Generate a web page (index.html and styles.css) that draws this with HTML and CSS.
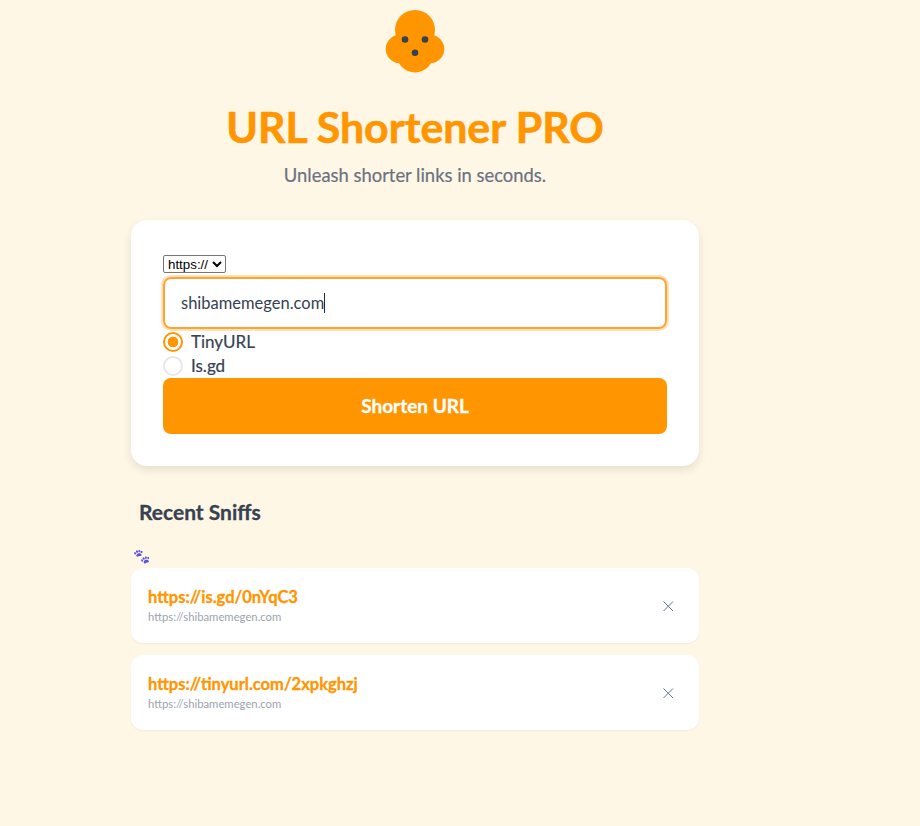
FILE: index.html
```html
<!DOCTYPE html>
<html lang="en">
<head>
<meta charset="utf-8">
<title>URL Shortener PRO</title>
<link rel="stylesheet" href="styles.css">
</head>
<body>
<main class="page">
  <header class="hero">
    <svg class="logo" width="60" height="64" viewBox="0 0 60 64" aria-hidden="true">
      <circle cx="30" cy="21" r="20" fill="#ff9500"/>
      <circle cx="15" cy="40" r="14.3" fill="#ff9500"/>
      <circle cx="45" cy="40" r="14.3" fill="#ff9500"/>
      <circle cx="30" cy="45" r="18.5" fill="#ff9500"/>
      <circle cx="20" cy="30.5" r="3.3" fill="#374151"/>
      <circle cx="40" cy="30.5" r="3.3" fill="#374151"/>
      <circle cx="30" cy="43.7" r="3.3" fill="#374151"/>
    </svg>
    <h1 class="title">URL Shortener PRO</h1>
    <p class="subtitle">Unleash shorter links in seconds.</p>
  </header>

  <section class="card">
    <select class="protocol"><option>https://</option><option>http://</option></select>
    <div class="url-field"><span class="url-text">shibamemegen.com</span><span class="caret"></span></div>
    <div class="radio-row"><span class="radio radio-on"></span><span class="radio-label">TinyURL</span></div>
    <div class="radio-row"><span class="radio"></span><span class="radio-label">Is.gd</span></div>
    <button class="submit" type="button">Shorten URL</button>
  </section>

  <h2 class="recent">Recent Sniffs</h2>
  <div class="paws">🐾</div>

  <ul class="links">
    <li class="link-card">
      <div class="link-body">
        <a class="short" href="#">https://is.gd/0nYqC3</a>
        <span class="orig">https://shibamemegen.com</span>
      </div>
      <svg class="close" width="12" height="12" viewBox="0 0 12 12" aria-hidden="true"><path d="M1.5 1.5l9.5 9.5M11 1.5l-9.5 9.5" stroke="#5f7390" stroke-width="1" fill="none"/></svg>
    </li>
    <li class="link-card">
      <div class="link-body">
        <a class="short" href="#">https://tinyurl.com/2xpkghzj</a>
        <span class="orig">https://shibamemegen.com</span>
      </div>
      <svg class="close" width="12" height="12" viewBox="0 0 12 12" aria-hidden="true"><path d="M1.5 1.5l9.5 9.5M11 1.5l-9.5 9.5" stroke="#5f7390" stroke-width="1" fill="none"/></svg>
    </li>
  </ul>
</main>
</body>
</html>
```

FILE: styles.css
```css
* { box-sizing: border-box; }
html, body { margin: 0; padding: 0; }
body {
  background: #fff7e6;
  color: #374151;
  font-family: Lato, "Noto Sans", sans-serif;
  height: 826px;
  overflow: hidden;
}
.page { width: 568px; margin-left: 131px; padding-top: 9px; }
.hero { display: flex; flex-direction: column; align-items: center; }
.logo { display: block; margin-bottom: 26px; }
.title {
  margin: 0;
  font-size: 42.8px;
  line-height: 56px;
  font-weight: 700;
  -webkit-text-stroke: 0.6px #ff9500;
  color: #ff9500;
  white-space: nowrap;
}
.subtitle {
  margin: 7px 0 0;
  font-size: 18.4px;
  line-height: 26px;
  -webkit-text-stroke: 0.2px #6b7280;
  color: #6b7280;
}
.card {
  margin-top: 32px;
  height: 246px;
  padding: 35px 32px 32px;
  background: #fff;
  border-radius: 16px;
  box-shadow: 0 4px 8px rgba(0,0,0,0.1);
  display: flex;
  flex-direction: column;
  align-items: flex-start;
}
.protocol {
  font-family: "Liberation Sans", Arial, sans-serif;
  font-size: 13.333px;
  height: 18px;
  background: #fff;
  color: #000;
  border: 1px solid #767676;
  border-radius: 2px;
  margin-bottom: 4px;
}
.url-field {
  width: 100%;
  height: 52px;
  padding: 0 16px;
  border: 2px solid #ffa333;
  border-radius: 8px;
  box-shadow: 0 0 0 2px rgba(255,149,0,0.28);
  display: flex;
  align-items: center;
  font-size: 16.5px;
  color: #374151;
}
.caret { width: 1px; height: 20px; background: #1f2937; }
.radio-row {
  display: flex;
  align-items: center;
  gap: 8px;
  height: 24px;
  font-size: 17px;
  line-height: 22px;
  color: #374151;
}
.radio-label { margin-top: -1px; -webkit-text-stroke: 0.2px #374151; }
.url-field + .radio-row { margin-top: 1px; }
.radio {
  width: 20px;
  height: 20px;
  border: 2px solid #e5e7eb;
  border-radius: 50%;
  background: #fff;
}
.radio-on {
  border-color: #ff9500;
  background: radial-gradient(circle, #ff9500 0 5px, #fff 5.7px);
}
.submit {
  margin-top: 0;
  width: 100%;
  height: 56px;
  padding: 0 0 2px;
  border: 0;
  border-radius: 8px;
  background: #ff9500;
  color: #fff;
  font-family: inherit;
  font-size: 19px;
  font-weight: 700;
  -webkit-text-stroke: 0.3px #fff;
}
.recent {
  margin: 32px 0 0 8px;
  font-size: 21px;
  line-height: 28px;
  font-weight: 700;
  -webkit-text-stroke: 0.3px #374151;
  color: #374151;
}
.paws {
  margin: 20px 0 0 2px;
  height: 22px;
  font-family: "Noto Sans", "DejaVu Sans", sans-serif;
  font-size: 14px;
  line-height: 20px;
  filter: hue-rotate(35deg);
}
.links { list-style: none; margin: 0; padding: 0; display: flex; flex-direction: column; gap: 12px; }
.link-card {
  height: 75px;
  padding: 0 25px 0 17px;
  background: #fff;
  border-radius: 12px;
  box-shadow: 0 1px 2px rgba(0,0,0,0.05);
  display: flex;
  align-items: center;
  justify-content: space-between;
}
.link-body { display: flex; flex-direction: column; margin-top: -2px; }
.short {
  font-size: 16.5px;
  line-height: 24px;
  font-weight: 700;
  -webkit-text-stroke: 0.3px #ff9500;
  color: #ff9500;
  text-decoration: none;
}
.orig { font-size: 11.3px; line-height: 16px; color: #9ca3af; }
```
